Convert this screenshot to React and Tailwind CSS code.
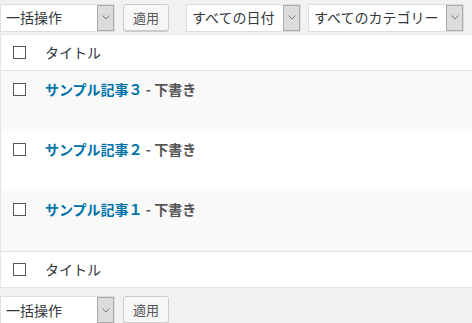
const font = { fontFamily: '"Noto Sans CJK JP", "Noto Sans", sans-serif' };

function Chevron() {
  return (
    <svg width="8" height="5" viewBox="0 0 8 5" fill="none">
      <path d="M0.5 0.5 L4 4 L7.5 0.5" stroke="#777" strokeWidth="1" />
    </svg>
  );
}

function Select({ label, width }) {
  return (
    <div className={`flex h-[28px] border border-[#ddd] bg-white ${width}`}>
      <div className="flex-1 pl-[5px] flex items-center text-[14px] text-[#32373c] whitespace-nowrap overflow-hidden">
        {label}
      </div>
      <div className="w-[17px] flex items-center justify-center bg-[#dcdcdc] border border-[#aaa]">
        <Chevron />
      </div>
    </div>
  );
}

function Apply() {
  return (
    <button className="h-[27px] px-[9px] rounded-[3px] border border-[#ccc] bg-[#f7f7f7] text-[13px] text-[#555] shadow-[0_1px_0_#ccc]">
      適用
    </button>
  );
}

function Box() {
  return <div className="w-[13px] h-[13px] border border-[#555] bg-white shrink-0" />;
}

function PostRow({ n, alt }) {
  return (
    <div className={`h-[60px] flex items-start pt-[11px] ${alt ? "bg-[#f9f9f9]" : "bg-white"}`}>
      <div className="w-[44px] pl-[12px] pt-[1px]">
        <Box />
      </div>
      <div className="text-[14px] font-bold leading-[14px]">
        <span className="text-[#0073aa]">サンプル記事{n}</span>
        <span className="text-[#555]"> - 下書き</span>
      </div>
    </div>
  );
}

export default function App() {
  return (
    <div className="w-[472px] h-[323px] overflow-hidden bg-[#f1f1f1]" style={font}>
      {/* top actions */}
      <div className="flex items-center h-[34px] pt-[1px]">
        <Select label="一括操作" width="w-[115px]" />
        <div className="ml-[8px]"><Apply /></div>
        <div className="ml-[17px]"><Select label="すべての日付" width="w-[115px]" /></div>
        <div className="ml-[7px]"><Select label="すべてのカテゴリー" width="w-[156px]" /></div>
      </div>

      {/* table */}
      <div className="bg-white border border-[#e5e5e5] w-[480px]">
        <div className="h-[36px] flex items-center border-b border-[#e1e1e1]">
          <div className="w-[44px] pl-[12px]"><Box /></div>
          <span className="text-[14px] text-[#32373c]">タイトル</span>
        </div>
        <PostRow n="３" alt />
        <PostRow n="２" />
        <PostRow n="１" alt />
        <div className="h-[36px] flex items-center border-t border-[#e1e1e1]">
          <div className="w-[44px] pl-[12px]"><Box /></div>
          <span className="text-[14px] text-[#32373c]">タイトル</span>
        </div>
      </div>

      {/* bottom actions */}
      <div className="flex items-start pt-[8px]">
        <Select label="一括操作" width="w-[115px]" />
        <div className="ml-[8px]"><Apply /></div>
      </div>
    </div>
  );
}
